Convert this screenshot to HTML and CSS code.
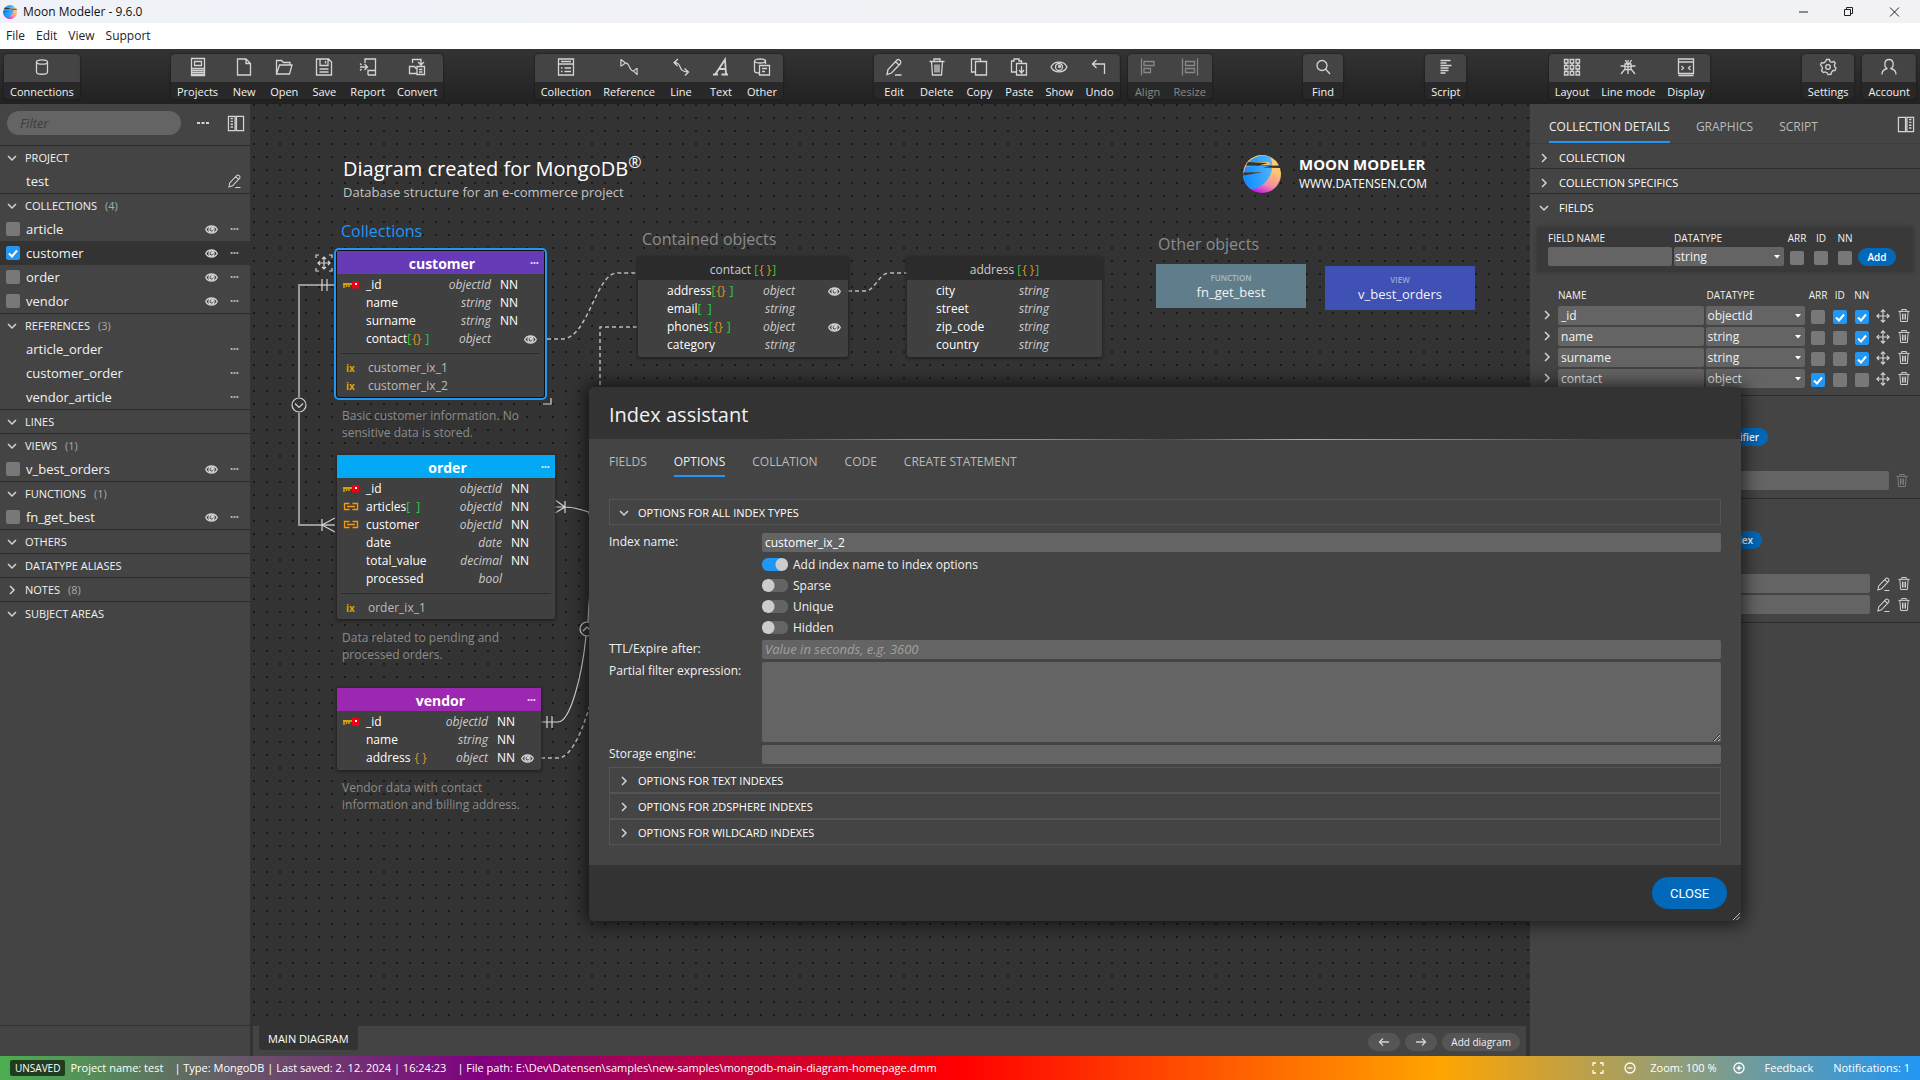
FILE: index.html
```html
<!DOCTYPE html>
<html lang="en">
<head>
<meta charset="utf-8">
<title>Moon Modeler - 9.6.0</title>
<link rel="stylesheet" href="styles.css">
</head>
<body>
<svg class="sprite" aria-hidden="true">
  <symbol id="logo" viewBox="0 0 38 38">
    <defs>
      <linearGradient id="lg-sun" x1="0.7" y1="0" x2="0.3" y2="1"><stop offset="0.3" stop-color="#ffcb6b"/><stop offset="0.7" stop-color="#f58aa5"/><stop offset="0.95" stop-color="#c21fe0"/></linearGradient>
      <linearGradient id="lg-sea" x1="0" y1="0.6" x2="1" y2="0.4"><stop offset="0" stop-color="#0b8dff"/><stop offset="1" stop-color="#4fb4ff"/></linearGradient>
    </defs>
    <circle cx="19" cy="19" r="19" fill="url(#lg-sun)"/>
    <path d="M27 2C33 12 27 31 9 34.500A19 19 0 0 1 .1 20.500L20 17.200 1.200 18C1.500 15 2 13 3 11.500L28 9.500 25 7 5.500 7.200A19 19 0 0 1 27 2Z" fill="url(#lg-sea)"/>
    <path d="M5 7 25 8 14 11 37 10.500 37.500 13 20 12.500 28 10.800 3 10.800ZM.5 17.500 20 17.200 .2 20.500Z" fill="#333"/>
  </symbol>
  <symbol id="i-db" viewBox="0 0 18 20"><ellipse cx="9" cy="5" rx="5.500" ry="2.200"/><path d="M3.500 5v10c0 3 11 3 11 0V5"/></symbol>
  <symbol id="i-projects" viewBox="0 0 18 20"><path d="M2.500 1.500h13v17h-13zM5.500 4.500h7v4h-7z"/><path d="M3 11.500h12M3 13.500h12M3 15.500h12M3 17.500h12"/></symbol>
  <symbol id="i-new" viewBox="0 0 18 20"><path d="M2.500 2h8.500l4.500 4.500V18h-13zM11 2v4.500h4.500"/></symbol>
  <symbol id="i-open" viewBox="0 0 18 20"><path d="M1.500 17V3.500h5l2 2h6.500V8M1.500 17 4.500 8h12.500l-2.500 9z"/></symbol>
  <symbol id="i-save" viewBox="0 0 18 20"><path d="M1.500 2h12l3 3v13h-15zM5 2v6.500h8V2M10.500 4v2.500M4.500 12h9M4.500 15h9"/></symbol>
  <symbol id="i-report" viewBox="0 0 18 20"><path d="M6 6V2h10.500v16H9M16 13.500H9V18M1 10h7.500M5.500 7l3 3-3 3M1 6.500 2.500 8M1 13.500 2.500 12"/></symbol>
  <symbol id="i-convert" viewBox="0 0 18 20"><path d="M4.500 6V2.500H13v5M10 5l3 3 3-3M1.500 9.500h5l1.500 2h1v5h-7.500zM9 9.500h7.500v8H9zM11 12.500h3.500M11 15h3.500"/></symbol>
  <symbol id="i-collection" viewBox="0 0 18 20"><path d="M1.500 2h15v16h-15zM1.500 7h15M4 4.500h10M4 11h1.500M7.500 11H14M4 14.500h1.500M7.500 14.500H14"/></symbol>
  <symbol id="i-reference" viewBox="0 0 20 20"><path d="M1 1.500v8M1.500 2 6 5.500 1.500 9M6 5.500c5 0 4 9 9 9M19 11v8M18.500 11.500 15 14.500l3.500 3.500"/></symbol>
  <symbol id="i-line" viewBox="0 0 18 20"><path d="M2 5.500c9 0 3 9.500 14 9.500M6 2 2 5.500 5.500 9M12.500 11.500 16.500 15 13 18.500"/></symbol>
  <symbol id="i-text" viewBox="0 0 18 20"><path d="M1 17.500h5M9.500 17.500h6.500M3.500 17 13 2.500 14 17M7 12h6.500" stroke-width="1.800"/></symbol>
  <symbol id="i-other" viewBox="0 0 18 20"><ellipse cx="7" cy="4" rx="5.500" ry="2"/><path d="M1.500 4v10c0 1.500 3 2 5 2M12.500 4v3M6.500 8.500h10V18h-10zM9 11.500h5M9 14.500h3M6.500 8.500V11"/></symbol>
  <symbol id="i-edit" viewBox="0 0 18 20"><path d="M2 17.500l1-5L12 3c1.500-1.500 5 1 3.500 3.500L6.500 16zM10.500 4.500 14 8M10 18h6.500"/></symbol>
  <symbol id="i-trash" viewBox="0 0 18 20"><path d="M1.500 4.500h15M6 4.500V2h6v2.500M3.500 4.500l1 13.500h9l1-13.500M7 7.500v8M9 7.500v8M11 7.500v8"/></symbol>
  <symbol id="i-copy" viewBox="0 0 18 20"><path d="M5.500 15h-4V2h9v2.500M5.500 4.500h11V18h-11z"/></symbol>
  <symbol id="i-paste" viewBox="0 0 18 20"><path d="M6 15H1.500V4H4V2h5v2h2.500v2M6.500 6.500h10V18h-10zM11.500 9v7M9 13l2.500 3 2.500-3"/></symbol>
  <symbol id="i-eye" viewBox="0 0 18 12"><path d="M1 6C4-.5 14-.5 17 6 14 12.500 4 12.500 1 6Z"/><circle cx="9" cy="6" r="3.500"/><circle cx="9.500" cy="5.500" r="1"/></symbol>
  <symbol id="i-undo" viewBox="0 0 18 20"><path d="M14.500 17V7h-12M6.500 3 2.500 7l4 4"/></symbol>
  <symbol id="i-align" viewBox="0 0 18 20"><path d="M2.500 1.500v17M5 4.500h10v4H5zM5 11.500h6.500v4H5z"/></symbol>
  <symbol id="i-resize" viewBox="0 0 18 20"><path d="M1.500 1.500v17M16.500 1.500v17M4.500 4.500h9v4h-9zM4.500 11.500h9v4h-9z"/></symbol>
  <symbol id="i-find" viewBox="0 0 18 20"><circle cx="8" cy="8.500" r="5"/><path d="m11.500 12 4.500 5"/></symbol>
  <symbol id="i-script" viewBox="0 0 18 20"><path d="M3.500 3.500h10M3.500 6h6M3.500 8.500h11M3.500 11h8M3.500 13.500h8M3.500 16h5" stroke-width="1.700"/></symbol>
  <symbol id="i-layout" viewBox="0 0 18 20"><path d="M1.500 2.500h3.500v3.500H1.500zM7.200 2.500h3.500v3.500H7.200zM13 2.500h3.500v3.500H13zM1.500 8.500h3.500V12H1.500zM7.200 8.500h3.500V12H7.200zM13 8.500h3.500V12H13zM1.500 14.500h3.500V18H1.500zM7.200 14.500h3.500V18H7.200zM13 14.500h3.500V18H13zM3 6v2.500M9 6v2.500M14.700 6v2.500M3 12v2.500M9 12v2.500M14.700 12v2.500"/></symbol>
  <symbol id="i-linemode" viewBox="0 0 18 20"><path d="M6 7h6v5.500H6zM8 7 6.500 3M10 7l2.500-4M6 9H1.500M12 9h4.500M6 12l-4 5M12 12l4 5M9 3v14M5 9.700h8"/></symbol>
  <symbol id="i-display" viewBox="0 0 18 20"><path d="M1.500 2h15v14.500h-15zM1.500 5h15M1.500 18.500h15M4.500 9l2 2-2 2M13.500 9l-2 2 2 2"/></symbol>
  <symbol id="i-settings" viewBox="0 0 18 20"><path d="m7.500 2.500 3 0 .5 2 2 .8 1.800-1 1.500 2-1 1.700.5 2 1.200 1-1 2.500-2 0-1.500 1.800-.5 2-3 .2-1-1.800-2-.8-1.800.6-1.700-2 1-1.800-.5-2L1.500 8l1-2.300 2.200.3L6.500 4.500z"/><circle cx="9" cy="10" r="2.300"/></symbol>
  <symbol id="i-account" viewBox="0 0 18 20"><path d="M9 2.500c5.500 0 5 8 1.500 9 3 .5 5.500 2.500 5.500 6M7.500 11.500c-3 .5-5.500 2.500-5.500 6M7.500 11.500C4 10.500 3.500 2.500 9 2.500"/></symbol>
  <symbol id="i-dots" viewBox="0 0 14 4"><path d="M1 2h3M5.500 2h3M10 2h3" stroke-width="2"/></symbol>
  <symbol id="i-panel" viewBox="0 0 18 18"><path d="M1 1.500h7v15H1zM9.500 1.500h7.500v15H9.500z"/><path d="M4.500 3v12" stroke-dasharray="1.500 1.500" stroke-width="2.500"/></symbol>
  <symbol id="i-move" viewBox="0 0 16 16"><path d="M8 1v14M1 8h14M5.500 3.500 8 1l2.500 2.500M5.500 12.500 8 15l2.500-2.500M3.500 5.500 1 8l2.500 2.500M12.500 5.500 15 8l-2.500 2.500"/></symbol>
  <symbol id="i-down" viewBox="0 0 10 10"><path d="M1 3l4 4 4-4"/></symbol>
  <symbol id="i-right" viewBox="0 0 10 10"><path d="M3 1l4 4-4 4"/></symbol>
  <symbol id="i-key" viewBox="0 0 16 10"><path d="M0 4h10" stroke="#ffc400" stroke-width="1.500"/><path d="M1 4v4M3.500 4v3M6 4v3" stroke="#d9a400" stroke-width="1.500"/><path d="M9 1h7v7.500H9z" fill="#f00012" stroke="none"/><path d="M12 3h2v2h-2z" fill="#fff" stroke="none"/></symbol>
  <symbol id="i-link" viewBox="0 0 16 10"><path d="M6.500 1.500h-5v6h5M9.500 1.500h5v6h-5M4 4.500h8" stroke="#ff9800"/></symbol>
</svg>

<header class="titlebar">
  <svg class="app-logo"><use href="#logo"/></svg>
  <span class="app-title">Moon Modeler - 9.6.0</span>
  <svg class="window-controls" viewBox="0 0 104 12" aria-hidden="true"><path d="M1 6h9M46.500 3.500h6v6h-6zM48.500 3.500v-2h6v6h-2M92 1.500l9 9M101 1.500l-9 9"/></svg>
</header>
<nav class="menubar"><a href="#">File</a><a href="#">Edit</a><a href="#">View</a><a href="#">Support</a></nav>

<div class="toolbar">
  <div class="tool-group"><button class="tool"><svg><use href="#i-db"/></svg><span>Connections</span></button></div>
  <i class="space wide"></i>
  <div class="tool-group">
    <button class="tool"><svg><use href="#i-projects"/></svg><span>Projects</span></button>
    <button class="tool"><svg><use href="#i-new"/></svg><span>New</span></button>
    <button class="tool"><svg><use href="#i-open"/></svg><span>Open</span></button>
    <button class="tool"><svg><use href="#i-save"/></svg><span>Save</span></button>
    <button class="tool"><svg><use href="#i-report"/></svg><span>Report</span></button>
    <button class="tool"><svg><use href="#i-convert"/></svg><span>Convert</span></button>
  </div>
  <i class="space wide"></i>
  <div class="tool-group">
    <button class="tool"><svg><use href="#i-collection"/></svg><span>Collection</span></button>
    <button class="tool"><svg><use href="#i-reference"/></svg><span>Reference</span></button>
    <button class="tool"><svg><use href="#i-line"/></svg><span>Line</span></button>
    <button class="tool"><svg><use href="#i-text"/></svg><span>Text</span></button>
    <button class="tool"><svg><use href="#i-other"/></svg><span>Other</span></button>
  </div>
  <i class="space wide"></i>
  <div class="tool-group">
    <button class="tool"><svg><use href="#i-edit"/></svg><span>Edit</span></button>
    <button class="tool"><svg><use href="#i-trash"/></svg><span>Delete</span></button>
    <button class="tool"><svg><use href="#i-copy"/></svg><span>Copy</span></button>
    <button class="tool"><svg><use href="#i-paste"/></svg><span>Paste</span></button>
    <button class="tool"><svg><use href="#i-eye"/></svg><span>Show</span></button>
    <button class="tool"><svg><use href="#i-undo"/></svg><span>Undo</span></button>
  </div>
  <i class="gap"></i>
  <div class="tool-group muted">
    <button class="tool"><svg><use href="#i-align"/></svg><span>Align</span></button>
    <button class="tool"><svg><use href="#i-resize"/></svg><span>Resize</span></button>
  </div>
  <i class="space wide"></i>
  <div class="tool-group"><button class="tool"><svg><use href="#i-find"/></svg><span>Find</span></button></div>
  <i class="space"></i>
  <div class="tool-group"><button class="tool"><svg><use href="#i-script"/></svg><span>Script</span></button></div>
  <i class="space"></i>
  <div class="tool-group">
    <button class="tool"><svg><use href="#i-layout"/></svg><span>Layout</span></button>
    <button class="tool"><svg><use href="#i-linemode"/></svg><span>Line mode</span></button>
    <button class="tool"><svg><use href="#i-display"/></svg><span>Display</span></button>
  </div>
  <i class="space wide"></i>
  <div class="tool-group"><button class="tool"><svg><use href="#i-settings"/></svg><span>Settings</span></button></div>
  <i class="gap"></i>
  <div class="tool-group"><button class="tool"><svg><use href="#i-account"/></svg><span>Account</span></button></div>
</div>

<main class="workspace">
  <aside class="sidebar">
    <div class="filter-row">
      <input class="filter" type="text" placeholder="Filter" aria-label="Filter">
      <svg class="dots big"><use href="#i-dots"/></svg>
      <svg class="panel-icon"><use href="#i-panel"/></svg>
    </div>
    <section class="tree">
      <h2><svg class="chev"><use href="#i-down"/></svg>PROJECT</h2>
      <div class="item indent"><span>test</span><svg class="pencil"><use href="#i-edit"/></svg></div>
    </section>
    <section class="tree">
      <h2><svg class="chev"><use href="#i-down"/></svg>COLLECTIONS <em>(4)</em></h2>
      <div class="item"><label><input type="checkbox">article</label><svg class="eye"><use href="#i-eye"/></svg><svg class="dots"><use href="#i-dots"/></svg></div>
      <div class="item active"><label><input type="checkbox" checked>customer</label><svg class="eye"><use href="#i-eye"/></svg><svg class="dots"><use href="#i-dots"/></svg></div>
      <div class="item"><label><input type="checkbox">order</label><svg class="eye"><use href="#i-eye"/></svg><svg class="dots"><use href="#i-dots"/></svg></div>
      <div class="item"><label><input type="checkbox">vendor</label><svg class="eye"><use href="#i-eye"/></svg><svg class="dots"><use href="#i-dots"/></svg></div>
    </section>
    <section class="tree">
      <h2><svg class="chev"><use href="#i-down"/></svg>REFERENCES <em>(3)</em></h2>
      <div class="item indent"><span>article_order</span><svg class="dots"><use href="#i-dots"/></svg></div>
      <div class="item indent"><span>customer_order</span><svg class="dots"><use href="#i-dots"/></svg></div>
      <div class="item indent"><span>vendor_article</span><svg class="dots"><use href="#i-dots"/></svg></div>
    </section>
    <section class="tree"><h2><svg class="chev"><use href="#i-down"/></svg>LINES</h2></section>
    <section class="tree">
      <h2><svg class="chev"><use href="#i-down"/></svg>VIEWS <em>(1)</em></h2>
      <div class="item"><label><input type="checkbox">v_best_orders</label><svg class="eye"><use href="#i-eye"/></svg><svg class="dots"><use href="#i-dots"/></svg></div>
    </section>
    <section class="tree">
      <h2><svg class="chev"><use href="#i-down"/></svg>FUNCTIONS <em>(1)</em></h2>
      <div class="item"><label><input type="checkbox">fn_get_best</label><svg class="eye"><use href="#i-eye"/></svg><svg class="dots"><use href="#i-dots"/></svg></div>
    </section>
    <section class="tree"><h2><svg class="chev"><use href="#i-down"/></svg>OTHERS</h2></section>
    <section class="tree"><h2><svg class="chev"><use href="#i-down"/></svg>DATATYPE ALIASES</h2></section>
    <section class="tree"><h2><svg class="chev"><use href="#i-right"/></svg>NOTES <em>(8)</em></h2></section>
    <section class="tree"><h2><svg class="chev"><use href="#i-down"/></svg>SUBJECT AREAS</h2></section>
    <div class="sidebar-foot"></div>
  </aside>

  <div class="center">
    <div class="canvas">
      <svg class="wires" aria-hidden="true">
        <g class="thick"><path d="M84 181H49V421H85"/></g>
        <path class="mask" d="M49 293v16"/>
        <path d="M72 175v12M77 175v12M72 415v12M72 421l13-7M72 421l13 7"/>
        <circle cx="49" cy="301" r="7"/><path d="m45 299.500 4 4 4-4"/>
        <path d="M305 403h10M315 397v12M315 403l-10-7M315 403l-10 6M315 403C325 403 334 406 346 411"/>
        <circle cx="346" cy="409" r="7"/>
        <path d="M291 618h17c12 0 24-45 28-86M297 612v12M302 612v12M338 518q1-30 6-60"/>
        <circle cx="337" cy="525" r="7"/><path d="m333 527 4-4 4 4"/>
        <g class="dash"><path d="M291 654h17c14 0 26-31 34-60M297 235h15c26 0 34-66 55-66h20M387 223h-37v70M598 187h17c10 0 14-18 24-18h18"/></g>
        <path d="M66 154v-3h3M79 151h3v3M82 164v3h-3M69 167h-3v-3M301 294v6h-8M74 153v12M68 159h12M72 155l2-2 2 2M72 163l2 2 2-2M70 157l-2 2 2 2M78 157l2 2-2 2"/>
      </svg>

      <div class="text title">Diagram created for MongoDB<sup>®</sup></div>
      <div class="text subtitle">Database structure for an e-commerce project</div>
      <div class="text label-collections">Collections</div>
      <div class="text label-contained">Contained objects</div>
      <div class="text label-others">Other objects</div>

      <div class="brand"><svg><use href="#logo"/></svg><div><b>MOON MODELER</b><span>WWW.DATENSEN.COM</span></div></div>

      <article class="card customer">
        <h3>customer<svg class="dots"><use href="#i-dots"/></svg></h3>
        <ul>
          <li><svg><use href="#i-key"/></svg><span>_id</span><i>objectId</i><b>NN</b></li>
          <li><span>name</span><i>string</i><b>NN</b></li>
          <li><span>surname</span><i>string</i><b>NN</b></li>
          <li><span>contact<u>[</u><s>{}</s> <u>]</u></span><i>object</i><svg class="eye"><use href="#i-eye"/></svg></li>
        </ul>
        <ul class="indexes"><li><em>ix</em><span>customer_ix_1</span></li><li><em>ix</em><span>customer_ix_2</span></li></ul>
      </article>
      <p class="note note-customer">Basic customer information. No sensitive data is stored.</p>

      <article class="card order">
        <h3>order<svg class="dots"><use href="#i-dots"/></svg></h3>
        <ul>
          <li><svg><use href="#i-key"/></svg><span>_id</span><i>objectId</i><b>NN</b></li>
          <li><svg><use href="#i-link"/></svg><span>articles<u>[ &nbsp;]</u></span><i>objectId</i><b>NN</b></li>
          <li><svg><use href="#i-link"/></svg><span>customer</span><i>objectId</i><b>NN</b></li>
          <li><span>date</span><i>date</i><b>NN</b></li>
          <li><span>total_value</span><i>decimal</i><b>NN</b></li>
          <li><span>processed</span><i>bool</i></li>
        </ul>
        <ul class="indexes"><li><em>ix</em><span>order_ix_1</span></li></ul>
      </article>
      <p class="note note-order">Data related to pending and processed orders.</p>

      <article class="card vendor">
        <h3>vendor<svg class="dots"><use href="#i-dots"/></svg></h3>
        <ul>
          <li><svg><use href="#i-key"/></svg><span>_id</span><i>objectId</i><b>NN</b></li>
          <li><span>name</span><i>string</i><b>NN</b></li>
          <li><span>address <s>{ }</s></span><i>object</i><b>NN</b><svg class="eye"><use href="#i-eye"/></svg></li>
        </ul>
      </article>
      <p class="note note-vendor">Vendor data with contact information and billing address.</p>

      <article class="card plain contact">
        <h3>contact <u>[</u><s>{ }</s><u>]</u></h3>
        <ul>
          <li><span>address<u>[</u><s>{}</s> <u>]</u></span><i>object</i><svg class="eye"><use href="#i-eye"/></svg></li>
          <li><span>email<u>[ &nbsp;]</u></span><i>string</i></li>
          <li><span>phones<u>[</u><s>{}</s> <u>]</u></span><i>object</i><svg class="eye"><use href="#i-eye"/></svg></li>
          <li><span>category</span><i>string</i></li>
        </ul>
      </article>
      <article class="card plain address">
        <h3>address <u>[</u><s>{ }</s><u>]</u></h3>
        <ul>
          <li><span>city</span><i>string</i></li>
          <li><span>street</span><i>string</i></li>
          <li><span>zip_code</span><i>string</i></li>
          <li><span>country</span><i>string</i></li>
        </ul>
      </article>
      <div class="box fn"><small>FUNCTION</small>fn_get_best</div>
      <div class="box view"><small>VIEW</small>v_best_orders</div>
    </div>
    <div class="diagram-tabs">
      <button class="diagram-tab">MAIN DIAGRAM</button>
      <button class="pill arrow" aria-label="Previous"><svg viewBox="0 0 12 10"><path d="M11 5H1.500M5 1.500 1.500 5 5 8.500"/></svg></button>
      <button class="pill arrow" aria-label="Next"><svg viewBox="0 0 12 10"><path d="M1 5h9.500M7 1.500 10.500 5 7 8.500"/></svg></button>
      <button class="pill">Add diagram</button>
    </div>
  </div>

  <aside class="details">
    <div class="tabs"><a href="#" class="on">COLLECTION DETAILS</a><a href="#">GRAPHICS</a><a href="#">SCRIPT</a><svg class="panel-icon flip"><use href="#i-panel"/></svg></div>
    <h2><svg class="chev"><use href="#i-right"/></svg>COLLECTION</h2>
    <h2><svg class="chev"><use href="#i-right"/></svg>COLLECTION SPECIFICS</h2>
    <section>
      <h2><svg class="chev"><use href="#i-down"/></svg>FIELDS</h2>
      <div class="add-field">
        <label for="nf">FIELD NAME</label><label for="nd">DATATYPE</label><label class="mid" for="na">ARR</label><label class="mid" for="ni">ID</label><label class="mid" for="nn">NN</label><span></span>
        <input id="nf" type="text"><select id="nd"><option>string</option></select><input id="na" type="checkbox"><input id="ni" type="checkbox"><input id="nn" type="checkbox"><button class="small-btn">Add</button>
      </div>
      <table class="fields">
        <thead><tr><th class="c-open"></th><th class="c-name">NAME</th><th class="c-type">DATATYPE</th><th class="c-chk">ARR</th><th class="c-chk">ID</th><th class="c-chk">NN</th><th class="c-act"></th><th class="c-act"></th></tr></thead>
        <tbody>
          <tr><td><svg class="chev"><use href="#i-right"/></svg></td><td><input type="text" value="_id" aria-label="Name"></td><td><select aria-label="Datatype"><option>objectId</option></select></td><td><input type="checkbox" aria-label="ARR"></td><td><input type="checkbox" aria-label="ID" checked></td><td><input type="checkbox" aria-label="NN" checked></td><td><svg class="move"><use href="#i-move"/></svg></td><td><svg class="trash"><use href="#i-trash"/></svg></td></tr>
          <tr><td><svg class="chev"><use href="#i-right"/></svg></td><td><input type="text" value="name" aria-label="Name"></td><td><select aria-label="Datatype"><option>string</option></select></td><td><input type="checkbox" aria-label="ARR"></td><td><input type="checkbox" aria-label="ID"></td><td><input type="checkbox" aria-label="NN" checked></td><td><svg class="move"><use href="#i-move"/></svg></td><td><svg class="trash"><use href="#i-trash"/></svg></td></tr>
          <tr><td><svg class="chev"><use href="#i-right"/></svg></td><td><input type="text" value="surname" aria-label="Name"></td><td><select aria-label="Datatype"><option>string</option></select></td><td><input type="checkbox" aria-label="ARR"></td><td><input type="checkbox" aria-label="ID"></td><td><input type="checkbox" aria-label="NN" checked></td><td><svg class="move"><use href="#i-move"/></svg></td><td><svg class="trash"><use href="#i-trash"/></svg></td></tr>
          <tr><td><svg class="chev"><use href="#i-right"/></svg></td><td><input type="text" value="contact" aria-label="Name"></td><td><select aria-label="Datatype"><option>object</option></select></td><td><input type="checkbox" aria-label="ARR" checked></td><td><input type="checkbox" aria-label="ID"></td><td><input type="checkbox" aria-label="NN"></td><td><svg class="move"><use href="#i-move"/></svg></td><td><svg class="trash"><use href="#i-trash"/></svg></td></tr>
        </tbody>
      </table>
    </section>
    <section class="sub ids">
      <button class="small-btn">Add unique identifier</button>
      <div class="line"><input type="text" aria-label="Identifier"><svg class="trash faded"><use href="#i-trash"/></svg></div>
    </section>
    <section class="sub idx">
      <button class="small-btn">Add new collection index</button>
      <div class="line"><input type="text" aria-label="Index"><svg class="pencil"><use href="#i-edit"/></svg><svg class="trash"><use href="#i-trash"/></svg></div>
      <div class="line"><input type="text" aria-label="Index"><svg class="pencil"><use href="#i-edit"/></svg><svg class="trash"><use href="#i-trash"/></svg></div>
    </section>
  </aside>
</main>

<footer class="statusbar">
  <strong>UNSAVED</strong><span>Project name: test</span><span>| Type: MongoDB | Last saved: 2. 12. 2024 | 16:24:23</span><span>| File path: E:\Dev\Datensen\samples\new-samples\mongodb-main-diagram-homepage.dmm</span>
  <div class="status-right">
    <svg viewBox="0 0 12 12"><path d="M1 4V1h3M8 1h3v3M11 8v3H8M4 11H1V8"/></svg>
    <svg viewBox="0 0 12 12"><circle cx="6" cy="6" r="5"/><path d="M3.500 6h5"/></svg>
    <span>Zoom: 100 %</span>
    <svg viewBox="0 0 12 12"><circle cx="6" cy="6" r="5"/><path d="M3.500 6h5M6 3.500v5"/></svg>
    <a href="#">Feedback</a><a href="#">Notifications: 1</a>
  </div>
</footer>

<div class="dialog" role="dialog" aria-label="Index assistant">
  <h1>Index assistant</h1>
  <div class="rainbow"></div>
  <div class="dialog-body">
    <div class="tabs"><a href="#">FIELDS</a><a href="#" class="on">OPTIONS</a><a href="#">COLLATION</a><a href="#">CODE</a><a href="#">CREATE STATEMENT</a></div>
    <h2><svg class="chev"><use href="#i-down"/></svg>OPTIONS FOR ALL INDEX TYPES</h2>
    <div class="form">
      <label for="f-name">Index name:</label><input id="f-name" type="text" value="customer_ix_2">
      <div class="toggles">
        <label><input type="checkbox" checked>Add index name to index options</label>
        <label><input type="checkbox">Sparse</label>
        <label><input type="checkbox">Unique</label>
        <label><input type="checkbox">Hidden</label>
      </div>
      <label for="f-ttl">TTL/Expire after:</label><input id="f-ttl" type="text" placeholder="Value in seconds, e.g. 3600">
      <label for="f-partial">Partial filter expression:</label><textarea id="f-partial"></textarea>
      <label for="f-engine">Storage engine:</label><input id="f-engine" type="text">
    </div>
    <h2><svg class="chev"><use href="#i-right"/></svg>OPTIONS FOR TEXT INDEXES</h2>
    <h2><svg class="chev"><use href="#i-right"/></svg>OPTIONS FOR 2DSPHERE INDEXES</h2>
    <h2><svg class="chev"><use href="#i-right"/></svg>OPTIONS FOR WILDCARD INDEXES</h2>
  </div>
  <div class="dialog-foot"><button class="close">CLOSE</button></div>
  <svg class="grip" viewBox="0 0 8 8" aria-hidden="true"><path d="M0 8 8 0M4 8l4-4"/></svg>
</div>
</body>
</html>
```
FILE: styles.css
```css
* { box-sizing: border-box; margin: 0; padding: 0; }
body {
  height: 100vh; overflow: hidden; display: flex; flex-direction: column;
  font: 12px/18px "Open Sans", "Noto Sans", sans-serif; color: #f2f2f2; background: #333;
}
button, input, select, textarea { font: inherit; color: inherit; border: 0; outline: 0; }
button { background: none; }
a { color: inherit; text-decoration: none; }
ul { list-style: none; }
h1, h2, h3 { font-weight: 400; }
svg { fill: none; stroke: #d4d4d4; stroke-width: 1.300; flex: none; display: block; }
.sprite { position: absolute; width: 0; height: 0; }

.titlebar { height: 23px; flex: none; display: flex; align-items: center; padding: 0 18px 0 3px; background: linear-gradient(90deg, #eff3f9, #f2f2f4); color: #111; }
.app-logo { width: 14px; height: 14px; stroke: none; margin-right: 6px; }
.app-title { font-size: 12px; flex: 1; }
.window-controls { width: 104px; height: 12px; stroke: #222; stroke-width: 1; }
.menubar { height: 26px; flex: none; display: flex; align-items: center; gap: 11px; padding-left: 6px; background: #fff; color: #222; font-size: 12px; }

.toolbar { height: 55px; flex: none; display: flex; align-items: flex-start; padding: 5px 4px 0; background: linear-gradient(#333, #212121); }
.space { flex: 82 1 0; }
.space.wide { flex-grow: 91; }
.gap { width: 8px; }
.tool-group { display: flex; border-radius: 4px; overflow: hidden; box-shadow: 0 0 2px #111; background: linear-gradient(#444, #444) top / 100% 28px no-repeat, #282828; }
.tool { min-width: 40px; padding: 0 6px; height: 45px; display: flex; flex-direction: column; align-items: center; font-size: 11px; line-height: 20px; }
.tool svg { width: 18px; height: 20px; margin: 3px 0 5px; }
.muted { color: #888; }
.muted svg { stroke: #888; }

.workspace { flex: 1; min-height: 0; display: grid; grid-template-columns: 250px 1fr 390px; }
.sidebar { background: #444; display: flex; flex-direction: column; }
.filter-row { height: 41px; display: flex; align-items: center; padding: 0 5px 3px 7px; }
.filter { width: 174px; height: 24px; border-radius: 12px; background: #646464; padding-left: 13px; font-size: 13px; }
.filter::placeholder { color: #3c3c3c; font-style: italic; opacity: 1; }
.chev { width: 10px; height: 10px; stroke-width: 1.500; }
.eye { width: 13px; height: 9px; stroke-width: 1.800; }
.dots { width: 9px; height: 4px; }
.dots.big { width: 14px; margin: 0 auto 0 15px; }
.panel-icon { width: 18px; height: 17px; }
.panel-icon.flip { transform: scaleX(-1); margin: 3px 5px 0 auto; }
.pencil { width: 15px; height: 16px; }
.tree { border-top: 1px solid #2c2c2c; }
.tree h2 { display: flex; align-items: center; height: 23px; gap: 8px; padding-left: 7px; font-size: 11px; }
.tree h2 em { font-style: normal; color: #aaa; }
.item { height: 24px; display: flex; align-items: center; padding-right: 11px; font-size: 13px; }
.item.active { background: #333; }
.item label, .item span { flex: 1; display: flex; align-items: center; gap: 6px; padding-left: 6px; }
.item.indent span { padding-left: 26px; }
.item .pencil { margin-right: -3px; }
.item .eye { margin-right: 12px; }
.sidebar-foot { margin-top: auto; height: 31px; border-top: 1px solid #333; }
input[type=checkbox] { appearance: none; width: 14px; height: 14px; border-radius: 2px; background: #787878; flex: none; display: block; }
input[type=checkbox]:checked { background: #2196f3 url("data:image/svg+xml,%3Csvg xmlns='http://www.w3.org/2000/svg' viewBox='0 0 14 14'%3E%3Cpath d='M3 7.500l3 3 5-6' fill='none' stroke='white' stroke-width='2'/%3E%3C/svg%3E"); }

.center { display: flex; flex-direction: column; min-width: 0; min-height: 0; background: #333; }
.canvas { position: relative; flex: 1; overflow: hidden; background-image: radial-gradient(circle at 1px 1px, #1a1a1a 1px, transparent 1px); background-size: 13px 13px; background-position: 3px 0; }
.wires { position: absolute; inset: 0; width: 100%; height: 100%; stroke-width: 1.200; }
.wires .thick { stroke: #999; stroke-width: 2; }
.wires .mask { stroke: #333; stroke-width: 4; }
.wires .dash { stroke-dasharray: 4 3; stroke-width: 1.500; stroke: #bbb; }
.text { position: absolute; white-space: nowrap; }
.title { left: 93px; top: 51px; font-size: 20px; line-height: 28px; color: #fff; }
.title sup { font-size: 16px; line-height: 0; vertical-align: 8px; }
.subtitle { left: 93px; top: 78px; font-size: 13px; line-height: 20px; color: #c4c4c4; }
.label-collections, .label-contained, .label-others { font-size: 16px; line-height: 22px; color: #8c8c8c; }
.label-collections { left: 91px; top: 116px; color: #2196f3; }
.label-contained { left: 392px; top: 124px; }
.label-others { left: 908px; top: 129px; }
.brand { position: absolute; left: 993px; top: 51px; display: flex; align-items: center; gap: 18px; color: #fff; line-height: 19px; }
.brand svg { width: 38px; height: 38px; stroke: none; }
.brand b, .brand span { display: block; }
.brand b { font-size: 15px; }
.brand span { font-size: 12px; }
.card { position: absolute; background: #404040; box-shadow: 0 1px 3px 1px #222; border-radius: 2px; }
.card h3 { height: 23px; line-height: 25px; padding-left: 3px; text-align: center; font-size: 14px; font-weight: 700; color: #fff; position: relative; }
.card h3 .dots { position: absolute; right: 5px; top: 10px; stroke: #fff; }
.card ul { padding: 2px 0 3px; }
.card li { height: 18px; line-height: 18px; display: grid; grid-template-columns: 23px 1fr auto 24px 13px; align-items: center; padding: 0 7px 0 6px; color: #fff; }
.card li > span { grid-column: 2; grid-row: 1; white-space: nowrap; }
.card li i { grid-column: 3; grid-row: 1; margin-right: 9px; color: #ccc; }
.card li b { grid-column: 4; grid-row: 1; font-weight: 400; }
.card li svg { grid-column: 1; grid-row: 1; width: 16px; height: 10px; }
.card li .eye { grid-column: 5; width: 13px; height: 9px; }
.card u { color: #2ecc40; text-decoration: none; }
.card s { color: #d99a26; text-decoration: none; padding: 0 1px; }
.card .indexes { margin: 2px 4px 0; padding: 5px 0 2px; border-top: 1px solid #2c2c2c; }
.card .indexes li { color: #bbb; grid-template-columns: 22px 1fr; padding-left: 5px; }
.indexes em { font-style: normal; font-weight: 700; font-size: 10px; color: #d9a400; }
.customer { left: 87px; top: 147px; width: 207px; box-shadow: 0 0 0 1px #111, 0 0 0 3px #2196f3; }
.customer h3 { background: #673ab7; }
.order { left: 87px; top: 351px; width: 218px; }
.order h3 { background: #03a9f4; }
.vendor { left: 87px; top: 584px; width: 204px; }
.vendor h3 { background: #9c27b0; }
.plain h3 { background: #2b2b2b; font-weight: 400; font-size: 12px; color: #ccc; padding-left: 0; }
.contact { left: 388px; top: 153px; width: 210px; }
.address { left: 657px; top: 153px; width: 195px; }
.note { position: absolute; left: 92px; width: 190px; font-size: 12px; line-height: 17px; color: #8c8c8c; }
.note-customer { top: 303px; }
.note-order { top: 525px; }
.note-vendor { top: 675px; }
.box { position: absolute; width: 150px; height: 44px; padding-top: 8px; text-align: center; font-size: 13px; line-height: 16px; }
.box small { display: block; font-size: 8px; line-height: 12px; font-weight: 600; opacity: .5; }
.fn { left: 906px; top: 160px; background: #607d8b; }
.view { left: 1075px; top: 162px; background: #3f51b5; }
.diagram-tabs { height: 30px; margin: 0 4px 0 3px; padding: 1px 6px 0; background: #444; display: flex; align-items: center; gap: 5px; }
.diagram-tab { align-self: flex-start; height: 24px; padding: 0 9px; margin: -1px auto 0 0; background: #333; font-size: 11px; line-height: 26px; color: #fff; border-radius: 0 0 3px 3px; }
.pill { height: 18px; border-radius: 9px; background: #555; padding: 0 9px; font-size: 10px; font-weight: 500; }
.pill.arrow { padding: 0 10px; }
.pill svg { width: 12px; height: 10px; }

.details { background: #444; }
.tabs { display: flex; font-size: 12px; color: #bbb; gap: 27px; }
.tabs a { line-height: 20px; padding-bottom: 3px; border-bottom: 2px solid transparent; }
.tabs a.on { color: #eee; border-color: #2196f3; }
.details .tabs { height: 40px; padding: 12px 0 0 19px; border-bottom: 1px solid #3c3c3c; gap: 26px; }
.details .tabs a { line-height: 22px; padding-bottom: 1px; }
.details .tabs .panel-icon { margin-top: 0; }
.details h2 { height: 25px; display: flex; align-items: center; gap: 10px; padding: 4px 0 0 9px; font-size: 11px; border-bottom: 1px solid #2c2c2c; color: #fff; }
.details section { border-bottom: 1px solid #2c2c2c; }
.details section h2 { border: 0; padding-top: 3px; }
.details input[type=text], .details select { height: 19px; background: #646464; border-radius: 2px; width: 100%; padding-left: 3px; }
.details select { appearance: none; padding-left: 1px; background: #646464 url("data:image/svg+xml,%3Csvg xmlns='http://www.w3.org/2000/svg' viewBox='0 0 6 4'%3E%3Cpath d='M0 0h6L3 3.500z' fill='white'/%3E%3C/svg%3E") no-repeat right 4px center / 6px 4px; }
.add-field { margin: 8px 7px 0; height: 45px; padding: 2px 0 0 11px; background: #393939; border-radius: 3px; box-shadow: 0 0 4px #333; display: grid; grid-template-columns: 124px 112px 22px 22px 20px 38px; column-gap: 2px; grid-template-rows: 18px 19px; align-items: center; font-size: 10px; }
.add-field input[type=text], .add-field select { font-size: 12px; }
.details .add-field select { width: 110px; }
.add-field label { white-space: nowrap; }
.add-field .mid { width: 18px; display: flex; justify-content: center; }
.add-field input[type=checkbox] { margin: 2px 2px 0; }
.small-btn { background: #0168ba; color: #fff; border-radius: 9px; height: 18px; font-size: 10px; font-weight: 600; line-height: 18px; }
.fields { border-spacing: 2px; margin: 13px 0 5px 12px; table-layout: fixed; width: 373px; }
.fields th { font-weight: 400; font-size: 10px; text-align: left; height: 17px; line-height: 17px; }
.fields th.c-open { width: 12px; }
.fields th.c-name { width: 146px; }
.fields th.c-type { width: 98px; }
.fields th.c-chk { width: 20px; text-align: center; padding-left: 2px; }
.fields th.c-act { width: 19px; }
.fields td { height: 19px; }
.fields tbody input[type=checkbox] { margin: 2px 0 0 4px; }
.fields .chev { margin: 0 0 2px -2px; }
.fields td input[type=text], .fields td select { display: block; }
.move { width: 14px; height: 14px; margin-left: 3px; }
.trash { width: 14px; height: 15px; }
.fields .trash { margin-left: 3px; }
.faded { opacity: .4; }
.sub { padding: 32px 9px 6px 28px; }
.sub .small-btn { display: block; padding: 0 9px; margin-bottom: 25px; }
.ids { padding-right: 11px; }
.ids .small-btn { width: 210px; text-align: right; }
.idx .small-btn { width: 204px; text-align: right; }
.line { display: flex; align-items: center; gap: 6px; margin-bottom: 2px; }
.line input[type=text] { flex: 1; }

.statusbar { height: 24px; flex: none; display: flex; align-items: center; gap: 5px; padding: 0 10px; font-size: 11px; color: #fff; background: linear-gradient(90deg, #4caf50, purple 25%, red 50%, orange 75%, #2196f3); }
.statusbar strong { font-weight: 400; font-size: 10px; background: #203c20; border-radius: 2px; line-height: 16px; padding: 0 5px; }
.statusbar span + span { margin-left: 6px; }
.status-right { margin-left: auto; display: flex; align-items: center; gap: 20px; }
.status-right svg { width: 12px; height: 12px; stroke: #fff; }
.status-right span { margin: 0 -4px 0 -6px; }

.dialog { position: absolute; left: 589px; top: 387px; width: 60vw; background: #333; border-radius: 5px; box-shadow: 0 0 18px 3px rgba(0, 0, 0, .65); display: flex; flex-direction: column; }
.dialog h1 { height: 52px; padding: 0 20px; line-height: 56px; font-size: 20px; }
.rainbow { height: 1px; background: linear-gradient(90deg, #444 15%, #4caf50 27%, #d86a90 39%, red 50%, orange 62%, #2196f3 76%, #444 88%); }
.dialog-body { background: #444; padding: 12px 20px 20px; }
.dialog .tabs { margin-bottom: 22px; }
.dialog h2 { height: 26px; display: flex; align-items: center; gap: 9px; padding: 2px 0 0 9px; font-size: 11px; border: 1px solid #555; color: #fff; }
.form { display: grid; grid-template-columns: 153px 1fr; row-gap: 3px; margin: 8px 0 3px; line-height: 18px; }
.form input[type=text], .form textarea { background: #646464; border-radius: 2px; height: 19px; padding: 0 3px; width: 100%; display: block; color: #fff; }
.form textarea { height: 80px; }
.form ::placeholder { color: #a0a0a0; font-size: 13px; font-style: italic; opacity: 1; }
.toggles { grid-column: 2; display: grid; gap: 2px; padding: 0; }
.toggles label { display: flex; align-items: center; gap: 5px; line-height: 19px; }
.toggles input[type=checkbox] { width: 26px; height: 13px; border-radius: 6px; background: radial-gradient(circle at 6px 50%, #ccc 6px, #646464 7px); }
.toggles input[type=checkbox]:checked { background: radial-gradient(circle at 20px 50%, #ccc 6px, #2196f3 7px); }
.dialog-foot { height: 56px; display: flex; justify-content: flex-end; align-items: center; padding-right: 14px; }
.close { width: 75px; height: 32px; border-radius: 16px; background: #0168ba; color: #fff; font: 400 13px Roboto, sans-serif; }
.grip { position: absolute; right: 1px; bottom: 1px; width: 7px; height: 7px; stroke-width: 1; }
```
